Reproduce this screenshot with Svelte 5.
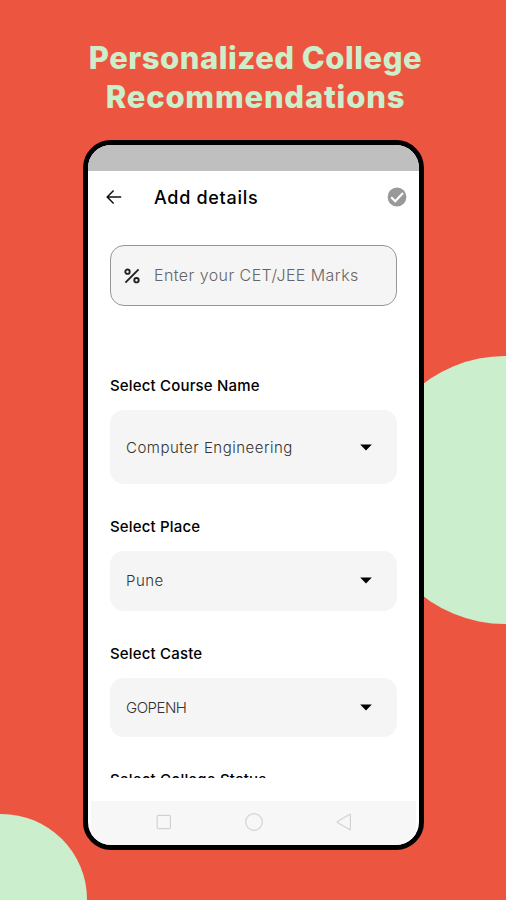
<script lang="ts">
  type Field = {
    label: string;
    value: string;
    tall?: boolean;
    caps?: boolean;
  };

  let marks = "";

  let fields: Field[] = [
    { label: "Select Course Name", value: "Computer Engineering", tall: true },
    { label: "Select Place", value: "Pune" },
    { label: "Select Caste", value: "GOPENH", caps: true },
  ];
</script>

<main class="poster">
  <div class="blob right"></div>
  <div class="blob left"></div>

  <h1>
    <span class="line1">Personalized College</span>
    <span class="line2">Recommendations</span>
  </h1>

  <section class="phone">
    <div class="status"></div>

    <header class="appbar">
      <button type="button" class="icon" aria-label="Back">
        <svg width="16" height="16" viewBox="0 0 16 16">
          <path d="M15.2 8H1.4M7.6 1.4L1.2 8l6.4 6.6" />
        </svg>
      </button>
      <h2>Add details</h2>
      <button type="button" class="icon done" aria-label="Save">
        <svg width="20" height="20" viewBox="0 0 20 20">
          <circle cx="10" cy="10" r="9.4" />
          <path d="M4.2 10.2l4 4 7.8-8.2" />
        </svg>
      </button>
    </header>

    <div class="form">
      <label class="marks">
        <svg width="16" height="16" viewBox="0 0 16 16">
          <circle cx="3.5" cy="3.7" r="2.2" />
          <circle cx="12.5" cy="12.2" r="2.2" />
          <path d="M14.6 1.4L1.4 14.6" />
        </svg>
        <input bind:value={marks} placeholder="Enter your CET/JEE Marks" />
      </label>

      {#each fields as field}
        <div class="field">
          <span class="label">{field.label}</span>
          <button type="button" class="select" class:tall={field.tall}>
            <span class:caps={field.caps}>{field.value}</span>
            <svg width="12" height="7" viewBox="0 0 12 7">
              <path d="M0.2 0.4h11.6L6 6.6z" />
            </svg>
          </button>
        </div>
      {/each}

      <div class="field">
        <span class="label">Select College Status</span>
      </div>
    </div>

    <nav>
      <svg width="16" height="16" viewBox="0 0 16 16">
        <rect x="1.2" y="1.4" width="13.2" height="13.2" rx="1.2" />
      </svg>
      <svg width="18" height="18" viewBox="0 0 18 18">
        <circle cx="9" cy="9" r="8.3" />
      </svg>
      <svg width="16" height="18" viewBox="0 0 16 18">
        <path d="M14.4 2v14a.6.6 0 0 1-1 .5L1.4 9.6a.6.6 0 0 1 0-1L13.4 1.500a.6.6 0 0 1 1 .5z" />
      </svg>
    </nav>
  </section>
</main>

<style>
  :global(body) {
    margin: 0;
  }
  .poster {
    position: relative;
    box-sizing: border-box;
    width: 506px;
    height: 900px;
    padding-top: 35px;
    overflow: hidden;
    background: #ec5640;
    font-family: Inter, "Liberation Sans", sans-serif;
  }
  .blob {
    position: absolute;
    border-radius: 50%;
    background: #cbefcd;
  }
  .right {
    top: 356px;
    left: 371px;
    width: 268px;
    height: 268px;
  }
  .left {
    top: 814px;
    left: -84px;
    width: 171px;
    height: 171px;
  }
  h1 {
    display: flex;
    flex-direction: column;
    align-items: center;
    box-sizing: border-box;
    height: 105px;
    margin: 0;
    padding-top: 4px;
    color: #cdeecb;
    font-size: 31px;
    font-weight: 850;
    line-height: 38.5px;
    white-space: nowrap;
  }
  h1 span {
    display: block;
    padding-left: 5px;
  }
  .line1 {
    letter-spacing: 0.5px;
  }
  .line2 {
    letter-spacing: 0.8px;
  }
  .phone {
    position: relative;
    display: flex;
    flex-direction: column;
    box-sizing: border-box;
    width: 341px;
    height: 710px;
    margin-left: 83px;
    overflow: hidden;
    border: 5px solid #000;
    border-radius: 28px;
    background: #fff;
  }
  .status {
    flex: none;
    height: 26px;
    background: #bfbfbf;
  }
  .appbar {
    flex: none;
    display: flex;
    align-items: center;
    height: 52px;
    padding: 0 12px 0 18px;
  }
  .icon {
    display: flex;
    padding: 0;
    border: 0;
    background: none;
  }
  .icon path {
    fill: none;
    stroke: #111;
    stroke-width: 1.5;
  }
  h2 {
    flex: 1;
    margin: 0 0 0 32px;
    color: #000;
    font-size: 18px;
    font-weight: 500;
    letter-spacing: 0.7px;
  }
  .done circle {
    fill: #999;
  }
  .done path {
    stroke: #fff;
    stroke-width: 2.2;
  }
  .form {
    height: 555px;
    box-sizing: border-box;
    padding: 22px 22px 0;
    overflow: hidden;
  }
  .marks {
    display: flex;
    align-items: center;
    box-sizing: border-box;
    height: 61px;
    margin-bottom: 68px;
    padding-left: 13px;
    border: 1px solid #969696;
    border-radius: 14px;
    background: #f5f5f5;
  }
  .marks svg {
    flex: none;
    fill: none;
    stroke: #222;
    stroke-width: 1.9;
  }
  input {
    flex: 1;
    min-width: 0;
    margin-left: 14px;
    padding: 0 0 2px;
    border: 0;
    outline: none;
    background: none;
    font: 300 16px Inter, "Liberation Sans", sans-serif;
    letter-spacing: 0.43px;
  }
  input::placeholder {
    color: #666;
    opacity: 1;
  }
  .field {
    margin-bottom: 31px;
  }
  .label {
    display: block;
    height: 24px;
    margin-bottom: 12px;
    color: #000;
    font-size: 15px;
    font-weight: 500;
    line-height: 24px;
    letter-spacing: 0.17px;
    white-space: nowrap;
  }
  .select {
    display: flex;
    align-items: center;
    justify-content: space-between;
    box-sizing: border-box;
    width: 287px;
    height: 59.5px;
    padding: 0 25px 0 16px;
    border: 0;
    border-radius: 14px;
    background: #f5f5f5;
    color: #333;
    font: 300 15px Inter, "Liberation Sans", sans-serif;
    letter-spacing: 0.5px;
  }
  .caps {
    letter-spacing: -0.5px;
  }
  .tall {
    height: 74px;
  }
  .select path {
    fill: #000;
  }
  nav {
    flex: 1;
    display: flex;
    align-items: center;
    justify-content: space-between;
    margin: 23px 3px 0;
    padding: 0 64px 3px 65px;
    background: #f7f7f7;
  }
  nav svg {
    fill: none;
    stroke: #d2d2d2;
    stroke-width: 1.2;
  }
</style>
